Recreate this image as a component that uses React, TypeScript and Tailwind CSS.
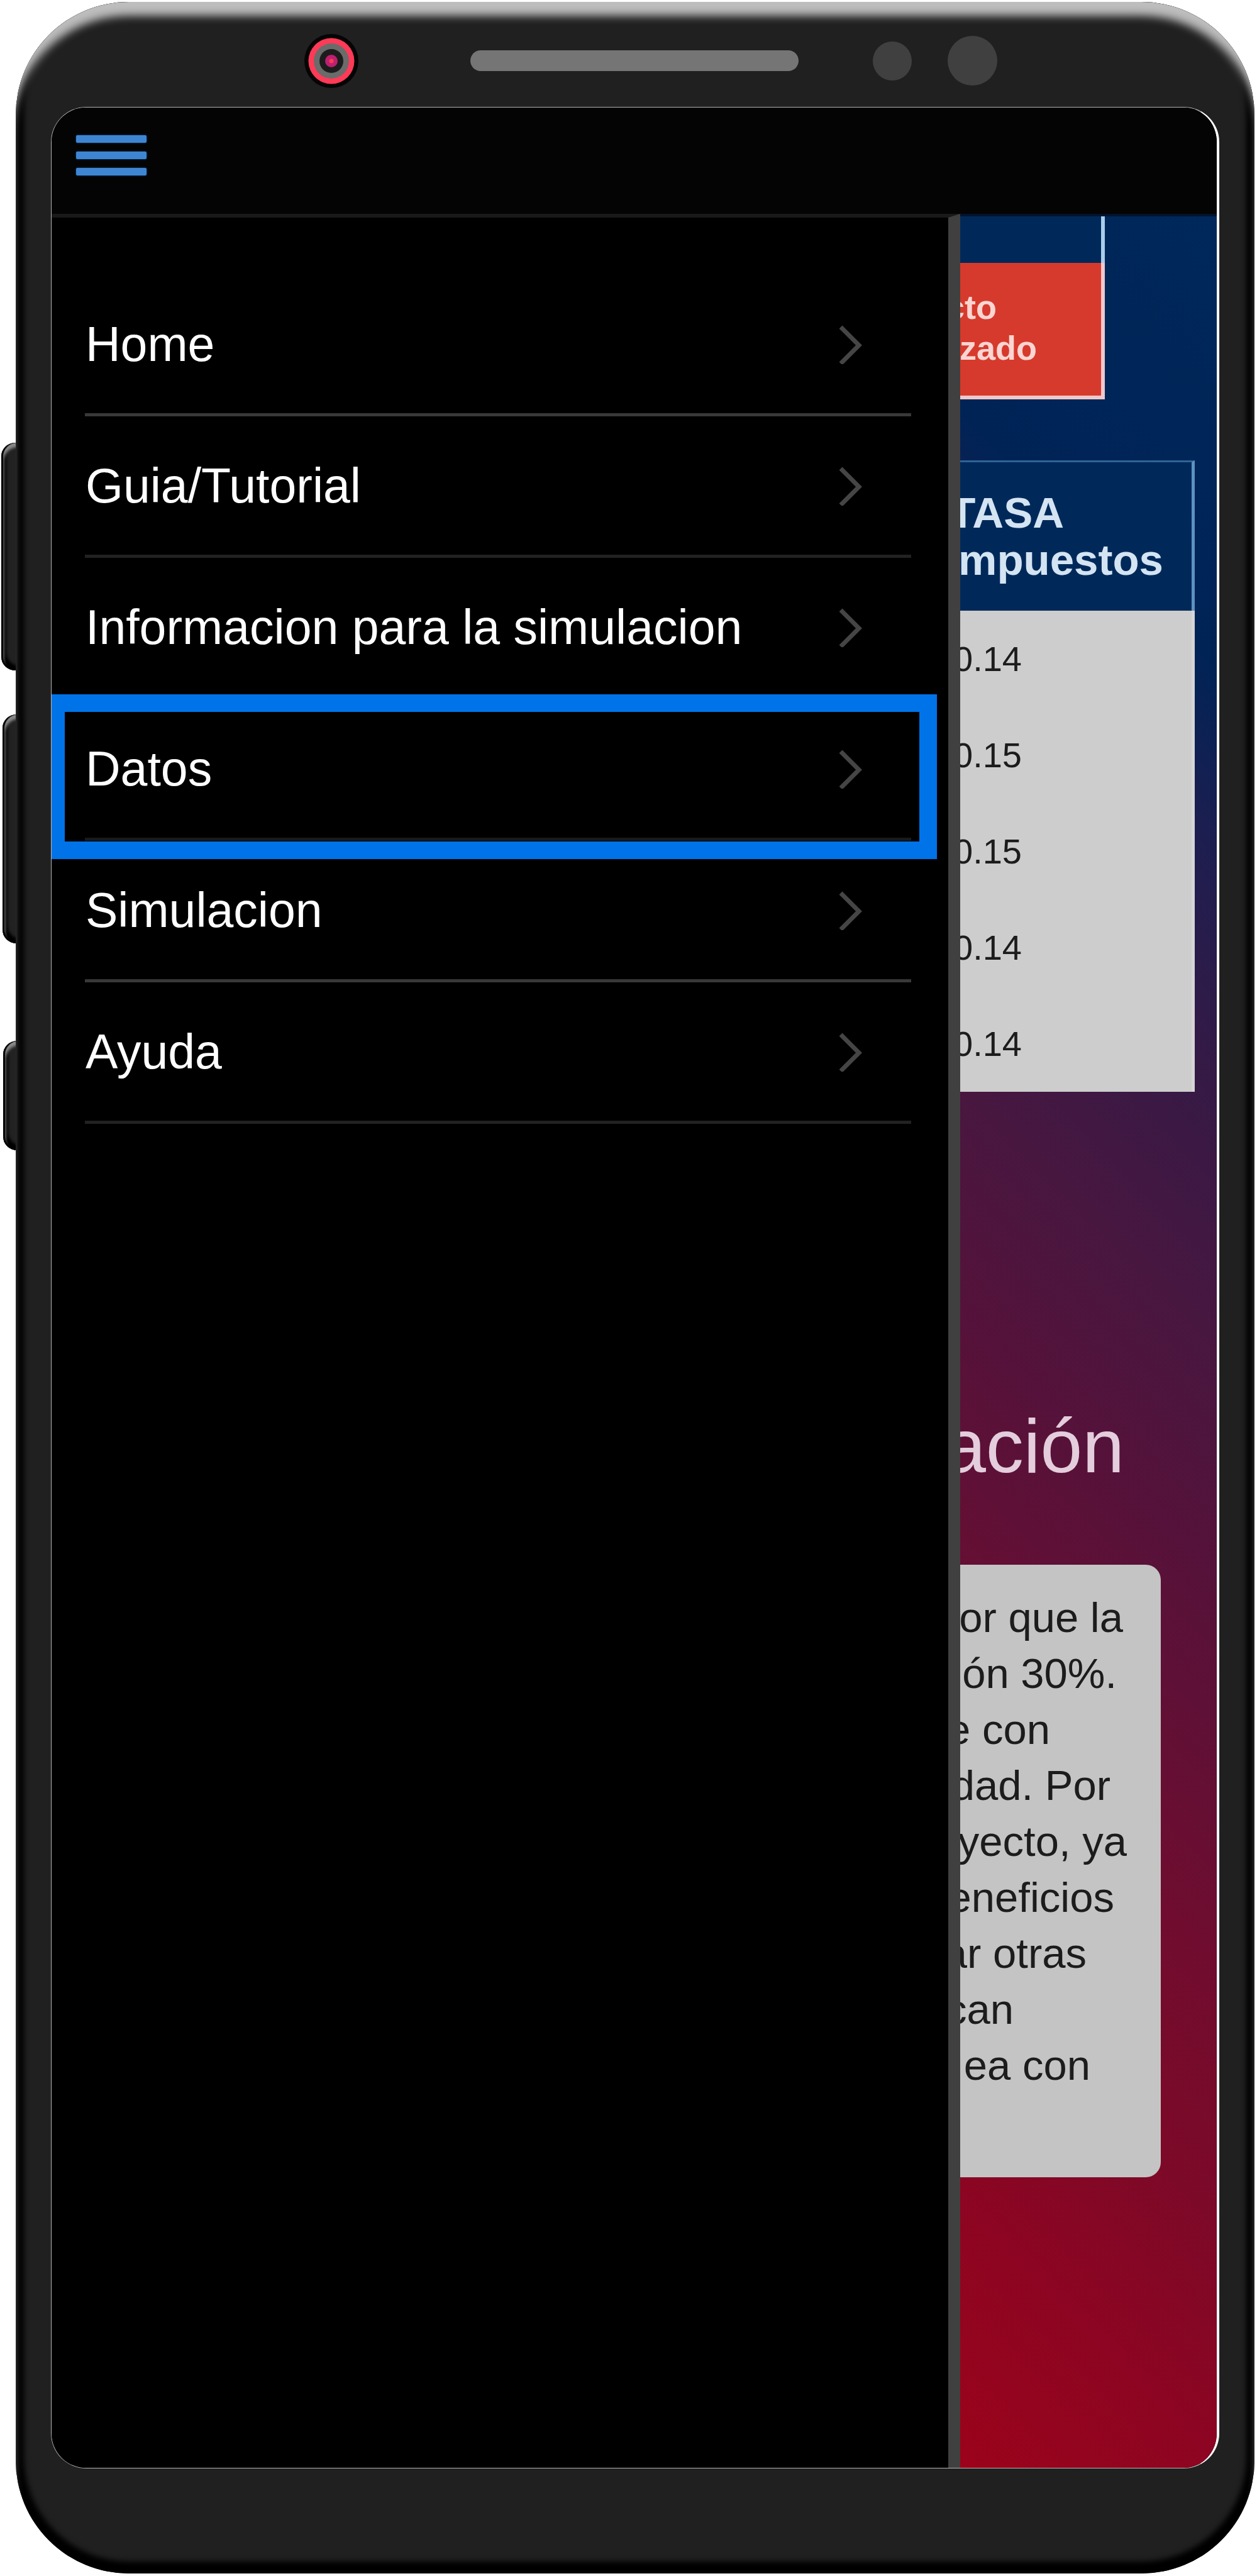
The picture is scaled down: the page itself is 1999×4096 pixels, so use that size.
import React from "react";

const menuItems = [
  { label: "Home", line: "border-[#383838]" },
  { label: "Guia/Tutorial", line: "border-[#222222]" },
  { label: "Informacion para la simulacion", line: "border-black" },
  { label: "Datos", line: "border-[#1a1a1a]", highlighted: true },
  { label: "Simulacion", line: "border-[#383838]" },
  { label: "Ayuda", line: "border-[#222222]" },
];

const rates = ["0.14", "0.15", "0.15", "0.14", "0.14"];

const paragraph = [
  { text: "or que la", end: "pr-[60px]" },
  { text: "ón 30%.", end: "pr-[70px]" },
  { text: "e con", end: "pr-[176px]" },
  { text: "dad. Por", end: "pr-[80px]" },
  { text: "yecto, ya", end: "pr-[54px]" },
  { text: "eneficios", end: "pr-[74px]" },
  { text: "ar otras", end: "pr-[118px]" },
  { text: "can", end: "pr-[234px]" },
  { text: "ea con", end: "pr-[112px]" },
];

function Camera() {
  return (
    <svg viewBox="0 0 88 88" className="size-[88px] shrink-0" aria-hidden="true">
      <circle cx="44" cy="44" r="43" fill="#050505" />
      <circle cx="44" cy="44" r="36.5" fill="#ff3a57" />
      <circle cx="44" cy="44" r="28" fill="#6b6b6b" />
      <circle cx="44" cy="44" r="19" fill="#1c1c1c" />
      <circle cx="44" cy="44" r="10" fill="#bd2070" />
      <circle cx="44" cy="44" r="3.5" fill="#ff3a50" />
    </svg>
  );
}

function Chevron() {
  return (
    <svg
      viewBox="0 0 40 64"
      className="h-16 w-10 shrink-0"
      fill="none"
      stroke="#454545"
      strokeWidth="7"
      aria-hidden="true"
    >
      <path d="M4 5 L33 34 L4 63" />
    </svg>
  );
}

/** A single line whose beginning runs under the open drawer. */
function Clipped({ className, children }: { className: string; children: React.ReactNode }) {
  return <span className={`flex justify-end whitespace-nowrap ${className}`}>{children}</span>;
}

function SideButton({ className }: { className: string }) {
  return (
    <div
      className={`absolute rounded-l-[22px] bg-[#222222] shadow-[inset_3px_0_1px_#000000,inset_4px_7px_4px_#8a8a8a,inset_8px_-7px_4px_#000000] ${className}`}
    />
  );
}

function Drawer() {
  return (
    <nav className="w-[78%] shrink-0 border-t-[6px] border-r-[19px] border-t-[#191919] border-r-[#404040] bg-black pt-[91px] pr-[59px] pl-[53px]">
      <ul>
        {menuItems.map((item) => (
          <li key={item.label} className={`relative border-b-[5px] ${item.line}`}>
            <a
              href="#"
              className="flex h-[220px] items-center justify-between pr-[76px] pl-px text-[77px] leading-none text-white"
            >
              {item.label}
              <Chevron />
            </a>
            {item.highlighted && (
              <div className="pointer-events-none absolute -top-2 -right-[41px] -bottom-[34px] -left-[60px] border-[28px] border-[#0073e8]" />
            )}
          </li>
        ))}
      </ul>
    </nav>
  );
}

function Content() {
  return (
    <main className="flex min-w-0 flex-1 flex-col overflow-hidden border-t-[4px] border-[#01132c] bg-[linear-gradient(225deg,#00285a_0%,#002356_18%,#1c1e50_25%,#341a46_34%,#481740_45%,#55123a_54%,#640f34_63%,#720c2e_71%,#7d0928_80%,#8c0522_89%,#9b031a_100%)]">
      <div className="mr-[178px] border-r-[6px] border-[#a9cdea] bg-[#00295a] pt-[74px]">
        <div className="-mr-[6px] border-r-[6px] border-b-[6px] border-[#efc8cc] bg-[#d63a2c] pt-[38px] pb-[43px] text-[54px] leading-[65px] font-bold text-[#fbd5d2]">
          <Clipped className="pr-[166px]">cto</Clipped>
          <Clipped className="pr-[102px]">zado</Clipped>
        </div>
      </div>

      <div className="mt-[97px] mr-[35px] border-t-[3px] border-r-[5px] border-t-[#2f6396] border-r-[#5d92c2]">
        <table className="w-full table-fixed">
          <thead>
            <tr>
              <th className="bg-[#00295a] py-[43px] text-[69px] leading-[75px] font-bold text-[#d4e4f2]">
                <Clipped className="pr-[203px]">TASA</Clipped>
                <Clipped className="pr-[45px]">mpuestos</Clipped>
              </th>
            </tr>
          </thead>
          <tbody>
            {rates.map((rate, i) => (
              <tr key={i}>
                <td className="h-[153px] bg-[#cdcdcd] text-[56px] leading-none text-[#1c1c1c] shadow-[5px_0_0_#d6d6d8]">
                  <Clipped className="pr-[270px]">{rate}</Clipped>
                </td>
              </tr>
            ))}
          </tbody>
        </table>
      </div>

      <h2 className="mt-[491px] text-[120px] leading-[144px] text-[#e4cddc]">
        <Clipped className="pr-[147px]">ación</Clipped>
      </h2>

      <div className="mt-[117px] mr-[89px] rounded-r-3xl bg-[#c4c4c4] pt-[39px] pb-[134px] text-[67px] leading-[89px] text-[#1c1c1c]">
        {paragraph.map((line) => (
          <Clipped key={line.text} className={line.end}>
            {line.text}
          </Clipped>
        ))}
      </div>
    </main>
  );
}

export default function App() {
  return (
    <div className="relative flex min-h-screen flex-col bg-white pt-[3px] pr-1 pb-1 pl-[25px] font-['Liberation_Sans',Arial,sans-serif]">
      <SideButton className="top-[704px] left-[2px] h-[362px] w-[40px]" />
      <SideButton className="top-[1136px] left-[4px] h-[364px] w-[40px]" />
      <SideButton className="top-[1655px] left-[5px] h-[174px] w-[40px]" />

      <div className="relative flex flex-1 flex-col rounded-[180px] bg-[#202020] px-14 pb-[167px] shadow-[inset_0_27px_14px_-5px_#bdbdbd,inset_0_-6px_8px_13px_#000000]">
        <div className="flex h-[167px] items-center pt-5 pl-[402px]">
          <Camera />
          <div className="ml-[177px] h-[33px] w-[522px] rounded-full bg-[#757575]" />
          <div className="ml-[118px] size-[62px] rounded-full bg-[#404040]" />
          <div className="ml-[57px] size-[79px] rounded-full bg-[#404040]" />
        </div>

        <div className="flex flex-1 flex-col overflow-hidden rounded-[56px] border border-r-4 border-[#b4b4b4] border-r-white bg-black">
          <header className="flex h-[169px] items-start bg-[#040404] pt-[44px] pl-[39px]">
            <button type="button" aria-label="Menu" className="flex w-[112px] flex-col gap-[14px]">
              <span className="h-3 w-full rounded-xs bg-[#3f86d2] shadow-[0_0_3px_#0a4a9a]" />
              <span className="h-3 w-full rounded-xs bg-[#3f86d2] shadow-[0_0_3px_#0a4a9a]" />
              <span className="h-3 w-full rounded-xs bg-[#3f86d2] shadow-[0_0_3px_#0a4a9a]" />
            </button>
          </header>
          <div className="flex flex-1">
            <Drawer />
            <Content />
          </div>
        </div>
      </div>
    </div>
  );
}
